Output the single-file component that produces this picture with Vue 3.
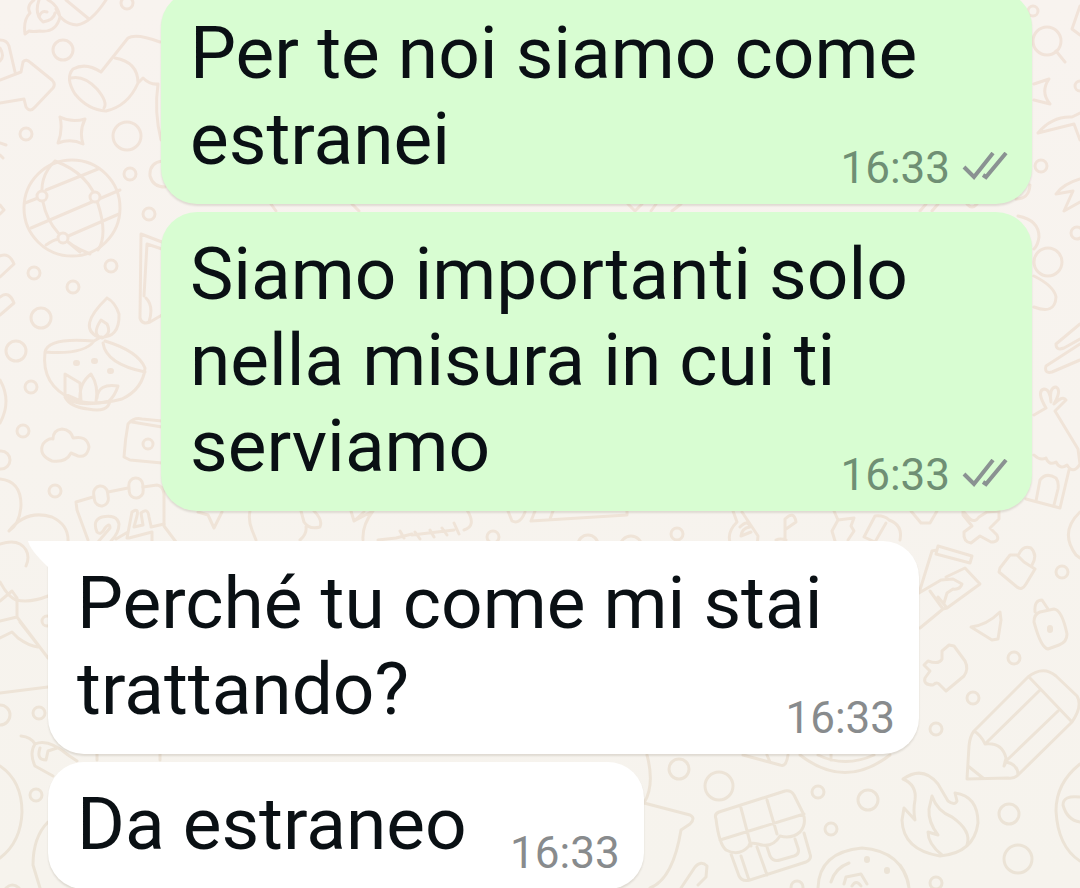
<script setup>
const messages = [
  { id: 1, side: 'out', text: 'Per te noi siamo come estranei', time: '16:33' },
  { id: 2, side: 'out', text: 'Siamo importanti solo nella misura in cui ti serviamo', time: '16:33' },
  { id: 3, side: 'in', text: 'Perché tu come mi stai trattando?', time: '16:33', tail: true },
  { id: 4, side: 'in', text: 'Da estraneo', time: '16:33' },
]

// Small bubbles scattered over the wallpaper: [cx, cy, r]
const dots = [
  [63, 50, 10], [127, 3, 6], [26, 134, 6], [127, 136, 14], [130, 174, 6], [149, 214, 6],
  [111, 266, 6], [34, 273, 6], [73, 287, 6], [41, 318, 10], [16, 351, 10], [31, 387, 6],
  [23, 431, 6], [55, 491, 6], [1, 460, 9], [39, 713, 6], [36, 795, 6], [0, 715, 10],
  [679, 769, 10], [719, 786, 14], [818, 792, 6], [868, 800, 10], [831, 829, 6], [797, 887, 6],
  [1062, 572, 6], [1014, 658, 6], [973, 698, 6], [936, 729, 6], [1009, 814, 10], [1018, 859, 14],
  [936, 883, 6], [1033, 11, 5], [1041, 166, 6], [1077, 233, 6], [1048, 262, 14], [1080, 86, 5],
  [493, 537, 6], [677, 534, 6], [47, 621, 5], [588, 545, 10], [631, 547, 11],
]
</script>

<template>
  <main class="chat">
    <svg class="wallpaper" viewBox="0 0 1080 888" preserveAspectRatio="xMinYMin slice" aria-hidden="true">
      <defs>
        <linearGradient id="ink" gradientUnits="userSpaceOnUse" x1="0" y1="0" x2="0" y2="888">
          <stop offset="0" stop-color="#f1e3d9" />
          <stop offset="0.55" stop-color="#f0e4d8" />
          <stop offset="1" stop-color="#ebe3d6" />
        </linearGradient>
      </defs>
      <g class="lines">
        <circle v-for="(d, i) in dots" :key="i" :cx="d[0]" :cy="d[1]" :r="d[2]" />

        <!-- rocket flame and body -->
        <path d="M34 0 Q26 6 30 13 Q23 20 25 34 L29 31 Q33 32 40 31 Q56 33 60 17 Q58 5 48 0 M39 0 Q34 14 43 22 Q54 20 55 13 M39 17 Q41 10 47 12 M56 9 Q62 24 77 25 Q91 23 106 0 M66 0 L89 19" />
        <!-- arrow and tag -->
        <path d="M0 80 L21 72 L23 62 Q26 58 31 63 L52 80 Q56 84 53 88 L35 107 Q30 113 26 107 L24 99 L0 103 M0 40 Q7 40 9 46 L15 72 M0 48 Q5 56 0 61" />
        <!-- sleeve and arm -->
        <path d="M101 72 L128 38 Q136 33 160 42 M101 72 Q86 62 73 69 Q65 78 75 94 Q88 110 106 111 Q128 106 138 83 Q138 62 115 58 M71 78 Q84 75 97 89 Q108 102 104 108 M138 83 L143 78 Q150 85 158 84 Q154 112 161 140" />
        <!-- sparkle and paw -->
        <path d="M60 117 Q72 123 85 119 Q79 131 83 144 Q71 138 58 143 Q63 130 60 117 M162 161 Q149 163 150 176 Q153 187 165 187 M0 143 L6 145 M0 155 L3 158 M0 205 L4 210 L0 214" />

        <!-- ball -->
        <circle cx="72" cy="208" r="48" />
        <path d="M55 161 Q38 177 43 202 Q50 238 90 254 M55 161 Q90 174 98 204 Q108 235 98 250 M46 190 L98 169 M25 203 L38 198 M31 228 L120 190 M66 237 L119 214 M46 245 Q56 238 60 240 M68 242 L80 252" />
        <circle class="knot" cx="42" cy="196" r="5" />
        <circle class="knot" cx="95" cy="197" r="5" />
        <circle class="knot" cx="63" cy="238" r="5" />

        <!-- book, pens at the left edge -->
        <path d="M162 242 L141 234 L140 318 Q142 325 150 322 L162 315 M162 249 L147 244 L144 296 M146 298 Q154 306 149 322" />
        <path d="M0 256 Q9 252 14 264 L0 277 M0 297 Q9 290 14 303 L0 315 M0 380 Q12 401 0 423" />

        <!-- oil lamp -->
        <path d="M107 298 Q77 327 98 337 Q120 339 119 314 Q115 302 107 298 M101 320 Q91 335 102 338 Q112 334 107 324 Z" />
        <path d="M101 337 L94 341 Q48 337 45 352 Q41 385 72 399 Q92 407 122 399 Q143 389 145 368 Q138 351 105 341 M94 341 Q84 355 45 352 M103 343 Q106 364 145 372" />
        <path d="M65 374 L80 383 L81 401 L65 394 Z M80 400 Q79 383 91 374 Q99 386 96 402 M97 398 Q98 383 118 386 Q115 396 108 402 M65 397 Q76 408 110 401 Q108 413 88 409 Q70 407 65 397" />
        <path class="specks" d="M76 363 h1 M94 361 h1 M110 371 h1" />
        <!-- cloud and drum -->
        <path d="M52 461 Q38 455 43 444 Q48 438 53 439 Q53 430 62 429 Q71 430 73 438 Q87 435 89 447 Q87 458 78 456 L71 453 Q66 463 52 461 Z" />
        <path d="M128 424 Q134 417 142 419 L162 421 M128 424 Q125 440 124 457 L130 460 L162 463 M132 422 L162 427" />
        <circle cx="148" cy="444" r="5" />

        <!-- calendar -->
        <path d="M108 492 L128 488 M143 487 L157 485 Q163 486 164 494 V526 L176 542 M93 497 L76 502 L77 510 L88 540" />
        <rect x="94" y="486" width="14" height="20" rx="7" transform="rotate(-8 101 496)" />
        <rect x="129" y="478" width="14" height="20" rx="7" transform="rotate(-4 136 488)" />
        <path d="M97 532 Q92 520 102 517 Q117 514 119 524 Q119 533 111 541 M97 532 Q101 536 105 528 Q110 522 110 528 L98 542 M132 512 Q139 507 137 516 L134 527 L143 525 L141 513 Q148 507 149 517 L151 526 M132 512 L127 538 M151 527 L164 524 M129 538 L152 532 V541 M116 539 L128 532" />

        <!-- leaves and cake by the left edge -->
        <path d="M0 479 Q21 481 21 505 Q20 524 9 531 M9 531 Q26 509 52 517 Q69 525 68 542 M0 544 Q19 538 26 550 Q30 557 26 566 M0 582 Q8 597 16 600 Q31 603 48 596" />
        <path d="M0 601 L12 591 L17 598 V617 L0 621 M17 617 L48 658 M0 638 L12 632 L18 638 Q29 646 38 647 M20 622 L38 645 M0 693 L48 687" />
        <path d="M21 736 Q31 737 35 744 Q29 753 35 766 L53 776 M35 744 Q48 738 68 755 L77 761 M40 748 Q36 760 46 760 L48 751 L57 748 M0 766 Q22 781 22 812 Q21 842 0 858 M48 822 Q33 837 33 865 L40 888 M6 888 Q12 882 19 888" />

        <!-- shapes between the bubbles -->
        <path d="M198 512 L208 515 L214 528 L222 512 M250 511 Q248 520 252 530 L256 540 M301 511 L304 522 Q309 530 320 527 Q323 520 314 511 M306 527 Q307 534 300 540 M351 511 L354 521 L364 512 M354 521 L373 511 Q362 525 363 540 M378 540 L396 538 L412 534 M400 531 L404 538 M415 532 L420 539 M430 530 L434 537 M442 528 L447 535 M454 523 L459 534 M464 530 Q477 526 467 510 M412 535 L454 530" />
        <path d="M508 511 L512 521 Q520 525 525 512 M535 511 L531 521 L627 515 V511 M553 511 L550 519" />
        <path d="M733 511 L737 522 Q727 532 730 542 M742 512 L758 536 Q758 542 756 546 M740 527 Q748 519 750 527 Q742 528 741 536 L751 532 M785 540 V519 Q794 510 796 522 L786 529 M776 540 Q780 538 786 540" />
        <path d="M834 511 L838 520 L832 531 L835 541 M838 520 L854 518 L851 526 L854 531 L848 540 M875 516 L864 537 L875 542 L886 523 M875 516 Q884 515 889 520 Q903 525 900 540 M911 511 L921 523 H930 L937 511" />
        <path d="M963 511 L970 519 Q975 523 979 517 L987 512 L999 511 L999 519 L990 528 L997 535 Q1000 542 991 542 L980 536 L971 543 Q963 542 964 532 L972 526 L963 515 Z" />
        <path d="M271 204 L276 211 M352 204 L359 211 M628 204 L635 211 L642 204 M651 211 L656 204 M672 211 L681 204 M920 211 L926 204 M932 211 L938 204 M967 204 Q972 210 977 204 M97 753 V760 M160 753 V760" />

        <!-- right edge, upper half -->
        <circle cx="1047" cy="41" r="14" />
        <path d="M1056 51 L1065 62 M1080 6 L1072 29 L1080 35 M1034 84 L1049 79 Q1040 92 1050 104 L1034 100 M1080 113 L1072 117 Q1052 116 1038 133 L1074 124 L1080 140 M1080 179 Q1063 184 1056 194 L1073 191 L1064 211 L1080 202 M1030 185 Q1029 199 1016 199 M1018 216 Q1039 220 1039 237 Q1038 245 1034 249" />
        <path d="M1034 276 Q1054 286 1056 297 Q1055 315 1034 307 M1080 324 L1056 344 Q1056 351 1064 348 L1080 339 M1080 344 L1046 366 Q1044 374 1052 372 L1080 360" />
        <path d="M1034 415 L1046 408 Q1036 391 1044 389 Q1050 389 1051 402 Q1049 387 1056 387 Q1062 390 1054 404 Q1063 395 1066 400 L1055 411 L1078 449 L1080 464 Q1073 475 1067 465 Q1060 470 1056 462 Q1049 466 1046 458 Q1040 461 1034 455" />
        <path d="M1026 499 L1060 508 L1069 470 M1036 501 L1040 480 Q1046 472 1056 478 Q1059 482 1058 489 L1054 505 M1080 512 Q1059 532 1076 555 L1080 558" />

        <!-- hand with cup, stamp, bottle -->
        <path d="M919 593 L932 551 L937 550 M938 546 L972 556 L970 563 L936 554 Z M919 593 L941 580 L953 579 L962 584 Q960 590 953 589 L947 593 L944 603 M946 577 L965 568 L980 584 L947 608 L943 609 L930 591 M943 609 L920 628 M938 597 L947 608" />
        <path d="M1010 555 L1000 568 L999 572 L1017 587 Q1022 591 1026 584 L1035 569 L1024 562 L1017 555 Z M1019 554 Q1023 545 1031 548 Q1038 555 1032 565" />
        <path d="M1040 612 L1054 609 Q1062 610 1067 634 Q1067 642 1059 645 L1048 649 Q1041 648 1034 622 Q1034 614 1040 612 M1035 612 Q1034 600 1042 600 L1048 609" />
        <path class="specks" d="M1050 628 v2" />
        <!-- paper plane and puzzle piece -->
        <path d="M971 627 Q987 625 1000 612 L1001 620 L998 639 L992 640 Z" />
        <path d="M949 645 L954 646 L965 661 Q969 669 964 676 L946 691 L940 685 Q937 681 933 685 Q923 685 925 678 L930 671 L924 665 L928 661 Q939 665 942 659 L942 651 Z" />

        <!-- pencil -->
        <path d="M974 731 L1028 677 Q1043 665 1056 676 L1077 696 Q1083 706 1072 722 L1018 775 Q1014 779 1008 778 L967 779 L969 746 Q970 736 974 731 M1029 677 L1072 722 M1040 690 L986 743 M1058 711 L1005 762 M974 731 Q981 735 985 744 Q1002 742 1006 758 L1004 766 L1006 762 Q1018 764 1018 775 M968 766 L983 778" />

        <!-- flame -->
        <path d="M903 779 Q923 765 938 784 L948 801 Q955 806 957 801 L955 793 Q978 796 978 823 Q974 853 940 856 Q903 850 902 820 L904 808 L915 820 Q913 810 915 800 Q917 785 903 779 Z" />
        <path d="M942 855 Q928 844 928 832 L938 835 Q928 822 929 809 L932 796 Q937 811 952 817 Q972 831 967 845" />
        <path d="M1080 764 Q1056 783 1056 811 Q1058 847 1080 861 M1080 797 Q1063 795 1063 805 Q1067 820 1080 822" />

        <!-- shop -->
        <path d="M716 819 Q714 814 719 812 L785 791 Q791 790 794 795 L803 813 Q807 824 800 832 Q792 839 780 836 Q772 849 758 844 Q749 842 749 846 Q739 857 726 850 Q719 844 716 819 M720 840 L804 814 M741 808 L751 846 M767 800 L777 834 M731 854 L739 876 Q742 882 750 880 L806 862 Q812 859 810 854 L804 833 M741 856 L749 880 M757 847 L767 875 M767 847 L770 856 Q773 862 780 860 L794 856 Q800 854 798 848 L795 839" />
        <!-- speech burst, megaphone, dish -->
        <path d="M647 755 Q655 785 644 803 L690 815 Q696 818 690 824 L681 830 Q673 879 650 888 M681 888 L695 867 Q701 860 707 866 L706 877 L698 885 M743 755 L780 765 Q786 768 788 755 M767 755 L770 762 M800 755 Q845 790 890 755 M818 755 Q845 768 874 755 M831 753 V760" />
        <path d="M818 888 Q819 852 862 848 Q903 851 909 888 M831 882 Q835 868 849 863 M844 884 L846 877 L861 874 L867 884 M852 886 Q856 879 861 886 M900 865 Q908 876 909 888" />
        <path class="specks" d="M867 859 v1 M887 870 v1" />
      </g>
    </svg>

    <article
      v-for="m in messages"
      :key="m.id"
      class="bubble"
      :class="[m.side, { tailed: m.tail }]"
    >
      <svg v-if="m.tail" class="tail" viewBox="0 0 60 40" aria-hidden="true">
        <path d="M0 0 H60 V40 H20 V26 Q2 9 0 0 Z" />
      </svg>
      <p class="text">{{ m.text }}<span class="spacer"></span></p>
      <footer class="meta">
        <time>{{ m.time }}</time>
        <svg v-if="m.side === 'out'" class="ticks" viewBox="0 0 46 32" role="img" aria-label="Consegnato">
          <path d="M2 15 L12 25 L31 1 M21 23 L24 25 L44 1" />
        </svg>
      </footer>
    </article>
  </main>
</template>

<style>
html,
body {
  margin: 0;
  background: #f7f3ee;
}
</style>

<style scoped>
.chat {
  position: relative;
  box-sizing: border-box;
  display: flex;
  flex-direction: column;
  gap: 8px;
  height: 100vh;
  padding: 0 48px;
  overflow: hidden;
  background: linear-gradient(#f8f3ef, #f6f3ed);
  font-family: Roboto, "Noto Sans", sans-serif;
}

.wallpaper {
  position: absolute;
  inset: 0;
  width: 100%;
  height: 100%;
}

.lines {
  fill: none;
  stroke: url(#ink);
  stroke-width: 3;
  stroke-linecap: round;
  stroke-linejoin: round;
}

.knot {
  fill: #f8f3ef;
}

.specks {
  stroke-width: 6;
}

.bubble {
  position: relative;
  box-sizing: border-box;
  display: grid;
  flex: none;
  max-width: calc(100% - 113px);
  padding: 19px 24px 22px 29px;
  border-radius: 36px;
  box-shadow: 0 2px 2px rgba(60, 40, 20, 0.12);
}

/* The history is scrolled a little past the top of the first message */
.bubble:first-of-type {
  margin-top: -9px;
}

.out {
  align-self: flex-end;
  background: #d8fdd2;
}

.in {
  align-self: flex-start;
  background: #fff;
}

.tailed {
  margin-top: 22px;
  border-top-left-radius: 0;
}

.tail {
  position: absolute;
  top: 0;
  left: -20px;
  width: 60px;
  height: 40px;
  fill: #fff;
}

.text,
.meta {
  grid-area: 1 / 1;
}

.text {
  position: relative;
  margin: 0;
  color: #0a1014;
  font-size: 73px;
  line-height: 86px;
}

.spacer {
  display: inline-block;
  width: 153px;
}

.out .spacer {
  width: 210px;
}

.meta {
  position: relative;
  align-self: end;
  justify-self: end;
  display: flex;
  align-items: center;
  gap: 12px;
  margin-bottom: -12px;
  color: #888b8d;
  font-size: 44px;
  line-height: 52px;
}

.out .meta {
  color: #6f8f74;
}

.ticks {
  width: 46px;
  height: 32px;
  fill: none;
  stroke: #8a9292;
  stroke-width: 4;
}
</style>
